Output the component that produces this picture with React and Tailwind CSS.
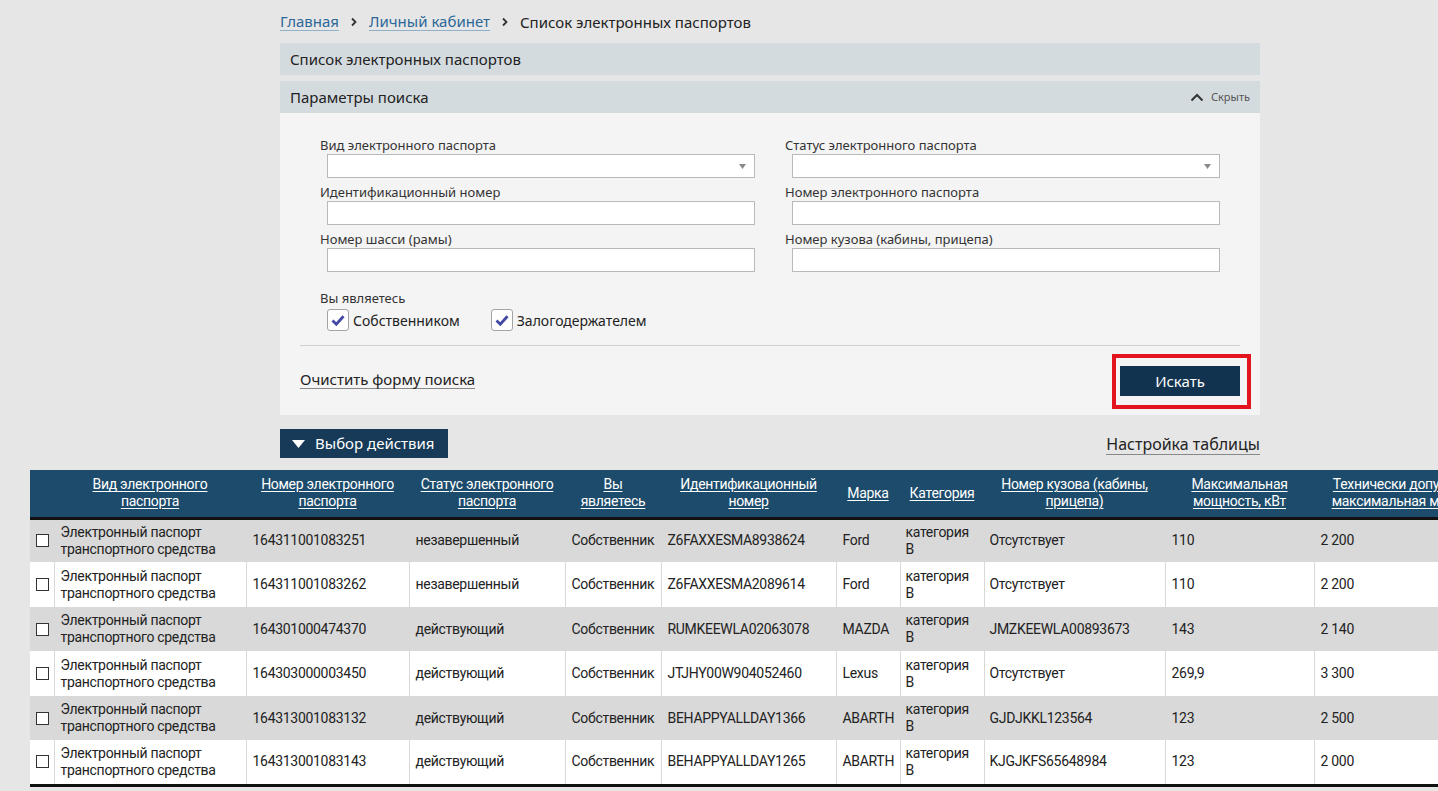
import React from "react";

const rows = [
  ["164311001083251", "незавершенный", "Собственник", "Z6FAXXESMA8938624", "Ford", "Отсутствует", "110", "2 200"],
  ["164311001083262", "незавершенный", "Собственник", "Z6FAXXESMA2089614", "Ford", "Отсутствует", "110", "2 200"],
  ["164301000474370", "действующий", "Собственник", "RUMKEEWLA02063078", "MAZDA", "JMZKEEWLA00893673", "143", "2 140"],
  ["164303000003450", "действующий", "Собственник", "JTJHY00W904052460", "Lexus", "Отсутствует", "269,9", "3 300"],
  ["164313001083132", "действующий", "Собственник", "BEHAPPYALLDAY1366", "ABARTH", "GJDJKKL123564", "123", "2 500"],
  ["164313001083143", "действующий", "Собственник", "BEHAPPYALLDAY1265", "ABARTH", "KJGJKFS65648984", "123", "2 000"],
];

function Sep() {
  return (
    <svg width="8" height="10" viewBox="0 0 8 10" className="mx-[11px]">
      <path d="M2 1.5 L5.5 5 L2 8.5" fill="none" stroke="#333" strokeWidth="1.8" />
    </svg>
  );
}

function Field({ label, select }) {
  return (
    <div className="flex flex-col">
      <div className="text-[13px] leading-[16px] text-[#333]">{label}</div>
      <div className="ml-[7px] mt-[1px] h-[24px] border border-[#b9b9b9] bg-white flex items-center justify-end pr-[8px]">
        {select && (
          <svg width="7" height="5" viewBox="0 0 7 5">
            <path d="M0 0 H7 L3.5 5 Z" fill="#8a8a8a" />
          </svg>
        )}
      </div>
    </div>
  );
}

function Check({ label }) {
  return (
    <div className="flex items-center gap-[4px]">
      <div className="w-[22px] h-[22px] border border-[#a3a3a3] rounded-[3px] bg-white flex items-center justify-center">
        <svg width="16" height="16" viewBox="0 0 16 16">
          <path d="M2.5 8.5 L6.3 12.2 L13.5 4.2" fill="none" stroke="#4248a3" strokeWidth="2.8" />
        </svg>
      </div>
      <span className="text-[14px] text-[#222]">{label}</span>
    </div>
  );
}

const headers = [
  "Вид электронного паспорта",
  "Номер электронного паспорта",
  "Статус электронного паспорта",
  "Вы являетесь",
  "Идентификационный номер",
  "Марка",
  "Категория",
  "Номер кузова (кабины, прицепа)",
  "Максимальная мощность, кВт",
  "Технически допустимая максимальная масса, кг",
];

const widths = ["w-[24px]", "w-[192px]", "w-[163px]", "w-[156px]", "w-[96px]", "w-[175px]", "w-[64px]", "w-[84px]", "w-[181px]", "w-[149px]", "w-[190px]"];

export default function App() {
  return (
    <div className="w-[1438px] h-[791px] overflow-hidden bg-[#e6e6e6] font-['Noto_Sans',sans-serif] text-[#222]">
      <div className="ml-[280px] w-[980px]">
        <div className="flex items-center h-[43px] text-[15px]">
          <span className="text-[#2c6898] border-b border-[#8fb0c8] leading-[18px]">Главная</span>
          <Sep />
          <span className="text-[#2c6898] border-b border-[#8fb0c8] leading-[18px]">Личный кабинет</span>
          <Sep />
          <span className="leading-[18px]">Список электронных паспортов</span>
        </div>
        <div className="h-[32px] bg-[#d4dbdf] flex items-center px-[10px] text-[15px]">Список электронных паспортов</div>
        <div className="mt-[6px] h-[32px] bg-[#d4dbdf] flex items-center justify-between px-[10px] text-[15px]">
          <span>Параметры поиска</span>
          <span className="flex items-center gap-[7px] text-[11px] text-[#555]">
            <svg width="14" height="9" viewBox="0 0 14 9">
              <path d="M1.5 7.5 L7 2 L12.5 7.5" fill="none" stroke="#333" strokeWidth="2" />
            </svg>
            Скрыть
          </span>
        </div>
        <div className="bg-[#f4f4f4] px-[20px] pt-[24px] pb-[19px]">
          <div className="px-[20px] grid grid-cols-2 gap-x-[30px]">
            <div className="flex flex-col gap-[6px]">
              <Field label="Вид электронного паспорта" select />
              <Field label="Идентификационный номер" />
              <Field label="Номер шасси (рамы)" />
            </div>
            <div className="flex flex-col gap-[6px]">
              <Field label="Статус электронного паспорта" select />
              <Field label="Номер электронного паспорта" />
              <Field label="Номер кузова (кабины, прицепа)" />
            </div>
          </div>
          <div className="px-[20px] mt-[18px]">
            <div className="text-[13px] leading-[16px] text-[#333]">Вы являетесь</div>
            <div className="mt-[3px] ml-[7px] flex gap-[31px]">
              <Check label="Собственником" />
              <Check label="Залогодержателем" />
            </div>
          </div>
          <div className="mt-[14px] h-px bg-[#cfcfcf]" />
          <div className="mt-[20px] h-[30px] flex items-center justify-between">
            <span className="text-[15px] leading-[18px] border-b border-[#888] text-[#222] mb-[3px]">Очистить форму поиска</span>
            <div className="relative w-[120px] h-[30px] bg-[#12334f] text-white text-[15px] flex items-center justify-center">
              Искать
              <div className="absolute left-[-8px] top-[-12px] right-[-11px] bottom-[-13px] border-[4px] border-[#e3141e]" />
            </div>
          </div>
        </div>
        <div className="mt-[14px] flex items-end justify-between">
          <div className="h-[29px] w-[168px] bg-[#163a57] text-white text-[15px] flex items-center pl-[12px] gap-[10px]">
            <svg width="13" height="8" viewBox="0 0 13 8">
              <path d="M0 0 H13 L6.5 8 Z" fill="#fff" />
            </svg>
            Выбор действия
          </div>
          <span className="mb-[3px] text-[16px] leading-[19px] border-b border-[#888] text-[#222]">Настройка таблицы</span>
        </div>
      </div>
      <div className="ml-[30px] mt-[12px] font-[Roboto,sans-serif] tracking-[-0.3px]">
        <table className="table-fixed border-collapse w-[1474px] text-[14px] leading-[17px]">
          <colgroup>
            {widths.map((w, i) => (
              <col key={i} className={w} />
            ))}
          </colgroup>
          <thead>
            <tr className="bg-[#1c4b6b] h-[48px] border-b-[3px] border-[#111]">
              <th />
              {headers.map((h, i) => (
                <th key={i} className={(i === 0 ? "px-[30px] " : "px-[6px] ") + "font-normal text-white text-center align-middle"}>
                  <span className="underline underline-offset-2">{h}</span>
                </th>
              ))}
            </tr>
          </thead>
          <tbody className="border-b-[3px] border-[#111]">
            {rows.map((r, i) => (
              <tr key={i} className={i % 2 === 0 ? "bg-[#d9d9d9] h-[44px]" : "bg-white h-[45px]"}>
                <td className="border-r border-[#d9d9d9] pl-[6px] align-middle">
                  <div className="w-[13px] h-[13px] border border-[#333] bg-white" />
                </td>
                <td className="border-r border-[#d9d9d9] px-[6px] text-[#222]">
                  Электронный паспорт<br />транспортного средства
                </td>
                <td className="border-r border-[#d9d9d9] px-[6px]">{r[0]}</td>
                <td className="border-r border-[#d9d9d9] px-[6px]">{r[1]}</td>
                <td className="border-r border-[#d9d9d9] px-[6px]">{r[2]}</td>
                <td className="border-r border-[#d9d9d9] px-[6px]">{r[3]}</td>
                <td className="border-r border-[#d9d9d9] px-[6px]">{r[4]}</td>
                <td className="border-r border-[#d9d9d9] px-[5px]">
                  категория<br />B
                </td>
                <td className="border-r border-[#d9d9d9] px-[5px]">{r[5]}</td>
                <td className="border-r border-[#d9d9d9] px-[6px]">{r[6]}</td>
                <td className="px-[6px]">{r[7]}</td>
              </tr>
            ))}
          </tbody>
        </table>
      </div>
    </div>
  );
}
